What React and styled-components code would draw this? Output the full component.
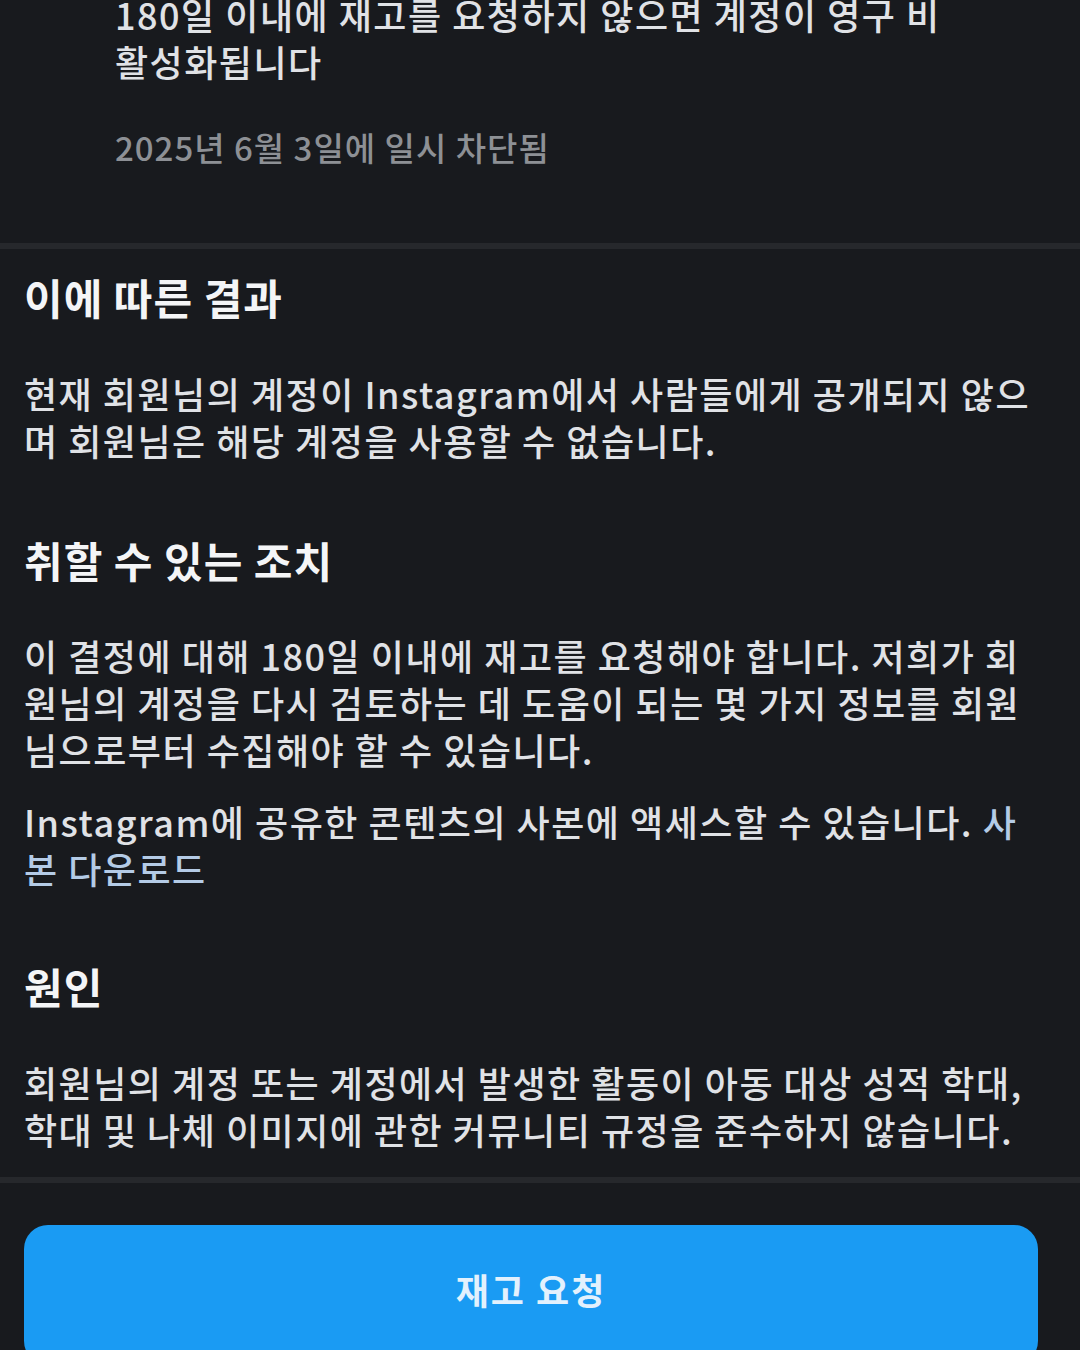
import React from "react";
import styled, { createGlobalStyle } from "styled-components";

const Global = createGlobalStyle`
  html, body {
    margin: 0;
    padding: 0;
    background: #181a1e;
    overflow: hidden;
  }
  body {
    font-family: "Noto Sans CJK KR", "Noto Sans", sans-serif;
    -webkit-font-smoothing: antialiased;
  }
`

const Page = styled.div`
  width: 1080px;
  height: 1350px;
  overflow: hidden;
  background: #181a1e;
  color: #e2e4e8;
`

const Scroll = styled.div`
  display: flex;
  flex-direction: column;
  margin-top: -9px;
`

const Notice = styled.div`
  padding: 0 42px 74px 115px;
  display: flex;
  flex-direction: column;
  gap: 40px;
`

const NoticeText = styled.p`
  margin: 0;
  font-size: 36px;
  line-height: 47px;
  font-weight: 500;
  letter-spacing: 1.5px;
  white-space: nowrap;
  color: #e0e2e6;
`

const DateLine = styled.p`
  margin: 0;
  font-size: 33px;
  line-height: 44px;
  font-weight: 500;
  letter-spacing: 1px;
  color: #8d9095;
`

const Divider = styled.div`
  height: 6px;
  background: #26282c;
`

const Section = styled.section`
  padding: 22px 42px 24px 24px;
  display: flex;
  flex-direction: column;
`

const Heading = styled.h2`
  margin: ${p => p.top || 0}px 0 0;
  font-size: 42px;
  line-height: 52px;
  font-weight: 700;
  letter-spacing: 1px;
  color: #f4f5f7;
  white-space: nowrap;
`

const Paragraph = styled.p`
  margin: ${p => p.top || 0}px 0 0;
  font-size: 36px;
  line-height: 47px;
  font-weight: 500;
  letter-spacing: 1.5px;
  color: #e0e2e6;
  white-space: nowrap;
`

const Link = styled.span`
  color: #b4cbe6;
`

const Footer = styled.div`
  padding: 42px 42px 0 24px;
`

const Button = styled.button`
  width: 100%;
  height: 140px;
  padding: 0 0 12px;
  border: none;
  border-radius: 24px;
  background: #1a9bf3;
  color: #e3f1fd;
  font-family: "Noto Sans CJK KR", "Noto Sans", sans-serif;
  font-size: 36px;
  font-weight: 700;
  letter-spacing: 2px;
`

export default function App() {
  return (
    <Page>
      <Global />
      <Scroll>
        <Notice>
          <NoticeText>
            180일 이내에 재고를 요청하지 않으면 계정이 영구 비<br />
            활성화됩니다
          </NoticeText>
          <DateLine>2025년 6월 3일에 일시 차단됨</DateLine>
        </Notice>
        <Divider />
        <Section>
          <Heading>이에 따른 결과</Heading>
          <Paragraph top={47}>
            현재 회원님의 계정이 Instagram에서 사람들에게 공개되지 않으<br />
            며 회원님은 해당 계정을 사용할 수 없습니다.
          </Paragraph>

          <Heading top={70}>취할 수 있는 조치</Heading>
          <Paragraph top={46}>
            이 결정에 대해 180일 이내에 재고를 요청해야 합니다. 저희가 회<br />
            원님의 계정을 다시 검토하는 데 도움이 되는 몇 가지 정보를 회원<br />
            님으로부터 수집해야 할 수 있습니다.
          </Paragraph>
          <Paragraph top={25}>
            Instagram에 공유한 콘텐츠의 사본에 액세스할 수 있습니다. <Link>사<br />
            본 다운로드</Link>
          </Paragraph>

          <Heading top={68}>원인</Heading>
          <Paragraph top={47}>
            회원님의 계정 또는 계정에서 발생한 활동이 아동 대상 성적 학대,<br />
            학대 및 나체 이미지에 관한 커뮤니티 규정을 준수하지 않습니다.
          </Paragraph>
        </Section>
        <Divider />
        <Footer>
          <Button>재고 요청</Button>
        </Footer>
      </Scroll>
    </Page>
  );
}
